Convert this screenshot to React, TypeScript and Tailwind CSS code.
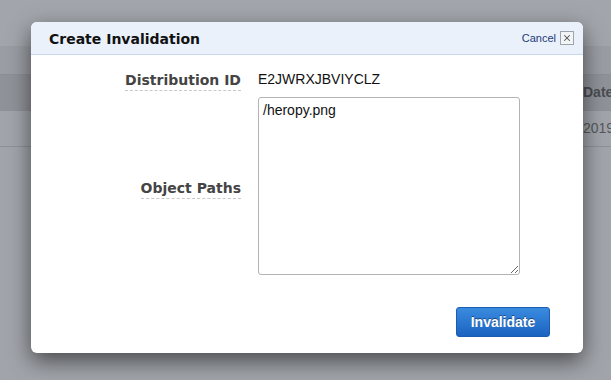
import { X } from 'lucide-react'

const labelCls =
  "font-['DejaVu_Sans',sans-serif] text-[14px] font-bold text-[#444] border-b border-dashed border-[#c8c8c8] leading-[18px] pb-[1px]"

export default function App() {
  return (
    <div className="relative w-[611px] h-[380px] overflow-hidden bg-[#a1a4aa] font-['Liberation_Sans',Arial,sans-serif]">
      {/* greyed page behind the dialog */}
      <div className="h-[46px] bg-[#a2a5ab]" />
      <div className="h-[29px] bg-[#9a9da3] border-b border-[#8c8f95]" />
      <div className="h-[35px] bg-[#8f9298] flex items-center pl-[583px]">
        <span className="text-[14px] font-bold text-[#4a4d52] whitespace-nowrap">Date</span>
      </div>
      <div className="h-[37px] bg-[#a1a4aa] border-t border-b border-[#8e9196] flex items-center pl-[583px]">
        <span className="text-[14px] text-[#55585d] whitespace-nowrap">2019</span>
      </div>

      {/* dialog */}
      <div className="absolute left-[31px] top-[22px] w-[552px] h-[331px] bg-white rounded-[6px] overflow-hidden shadow-[0_8px_22px_rgba(0,0,0,0.55)] flex flex-col">
        <div className="h-[33px] bg-[#eaf1fb] border-b border-[#c9d7ea] flex items-center justify-between pl-[18px] pr-[9px]">
          <h2 className="font-['DejaVu_Sans',sans-serif] text-[14px] font-bold text-[#111] pt-[2px]">Create Invalidation</h2>
          <div className="flex items-center gap-[4px]">
            <span className="text-[11px] text-[#1d3c78]">Cancel</span>
            <span className="w-[14px] h-[14px] border border-[#9da4ad] bg-[#f3f4f6] flex items-center justify-center">
              <X size={10} strokeWidth={2.5} className="text-[#555]" />
            </span>
          </div>
        </div>

        <div className="flex-1 flex flex-col pt-[16px]">
          <div className="flex items-start">
            <div className="w-[227px] flex justify-end pr-[17px]">
              <span className={labelCls}>Distribution ID</span>
            </div>
            <span className="text-[14px] leading-[17px] text-[#111]">E2JWRXJBVIYCLZ</span>
          </div>

          <div className="flex items-center mt-[6px]">
            <div className="w-[227px] flex justify-end pr-[17px] pt-[6px]">
              <span className={labelCls}>Object Paths</span>
            </div>
            <textarea
              defaultValue="/heropy.png"
              className="w-[262px] h-[178px] border border-[#b3b3b3] rounded-[3px] px-[4px] py-[2px] text-[14px] text-[#111] outline-none"
            />
          </div>

          <div className="flex justify-end pr-[33px] mt-[32px]">
            <button
              type="button"
              className="w-[94px] h-[30px] rounded-[3px] bg-gradient-to-b from-[#3a8be0] to-[#1b63c0] border border-[#1a5cb0] text-white text-[14px] font-bold [text-shadow:0_-1px_0_rgba(0,0,0,0.45)]"
            >
              Invalidate
            </button>
          </div>
        </div>
      </div>
    </div>
  )
}
